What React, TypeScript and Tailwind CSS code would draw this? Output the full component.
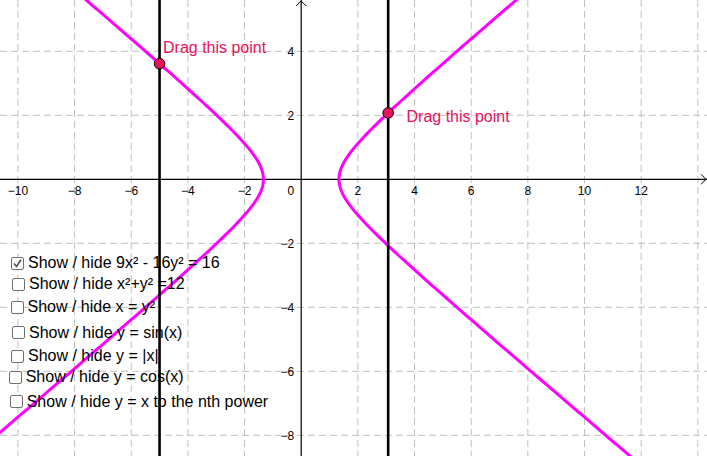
import React from "react";

const OX = 301.2;
const OY = 179.3;
const SX = 28.33;
const SY = 32;
const W = 707;
const H = 456;

const px = (x: number) => OX + x * SX;
const py = (y: number) => OY - y * SY;

function branch(sign: number) {
  const pts: string[] = [];
  for (let i = 0; i <= 400; i++) {
    const y = -9 + (15.5 * i) / 400;
    const x = sign * (4 / 3) * Math.sqrt(1 + y * y);
    pts.push(`${i === 0 ? "M" : "L"}${px(x).toFixed(2)},${py(y).toFixed(2)}`);
  }
  return pts.join(" ");
}

const rows = [
  { top: 263.3, box: 11, text: "Show / hide 9x² - 16y² = 16", checked: true },
  { top: 284, box: 12, text: "Show / hide x²+y² =12", checked: false },
  { top: 307, box: 10.5, text: "Show / hide x = y²", checked: false },
  { top: 332.7, box: 12, text: "Show / hide y = sin(x)", checked: false },
  { top: 356, box: 11, text: "Show / hide y = |x|", checked: false },
  { top: 377.3, box: 8.7, text: "Show / hide y = cos(x)", checked: false },
  { top: 401.7, box: 9.7, text: "Show / hide y = x to the nth power", checked: false },
];

export default function App() {
  const xTicks = [-10, -8, -6, -4, -2, 2, 4, 6, 8, 10, 12, 14];
  const yTicks = [4, 2, -2, -4, -6, -8];
  const xLabels = [-10, -8, -6, -4, -2, 2, 4, 6, 8, 10, 12];
  const fmt = (n: number) => (n < 0 ? "\u2212" + Math.abs(n) : String(n));
  const leftX = -5;
  const leftY = (3 / 4) * Math.sqrt(leftX * leftX - 16 / 9);
  const rightX = 3.07;
  const rightY = (3 / 4) * Math.sqrt(rightX * rightX - 16 / 9);

  return (
    <div className="relative w-[707px] h-[456px] overflow-hidden bg-white font-['Liberation_Sans',Arial,sans-serif]">
      <svg width={W} height={H} className="absolute left-0 top-0" style={{ fontFamily: "'Liberation Sans', Arial, sans-serif" }}>
        {/* grid */}
        {xTicks.map((t) => (
          <line key={"gx" + t} x1={px(t)} y1={0} x2={px(t)} y2={H} stroke="#c0c0c0" strokeWidth={1} strokeDasharray="7 4" />
        ))}
        {yTicks.map((t) => (
          <line key={"gy" + t} x1={0} y1={py(t)} x2={W} y2={py(t)} stroke="#c0c0c0" strokeWidth={1} strokeDasharray="7 4" />
        ))}
        {/* axes */}
        <line x1={0} y1={OY} x2={W} y2={OY} stroke="#000" strokeWidth={1.2} />
        <line x1={OX} y1={0} x2={OX} y2={H} stroke="#000" strokeWidth={1.2} />
        <polyline points={`${W - 6},${OY - 5} ${W - 1},${OY} ${W - 6},${OY + 5}`} fill="none" stroke="#000" strokeWidth={1} />
        <polyline points={`${OX - 5},${6} ${OX},${1} ${OX + 5},${6}`} fill="none" stroke="#000" strokeWidth={1} />
        {/* labels */}
        {xLabels.map((t) => (
          <text key={"lx" + t} x={px(t)} y={OY + 16} fontSize={12} textAnchor="middle" fill="#000">
            {fmt(t)}
          </text>
        ))}
        {yTicks.map((t) => (
          <text key={"ly" + t} x={OX - 7} y={py(t) + 4.5} fontSize={12} textAnchor="end" fill="#000">
            {fmt(t)}
          </text>
        ))}
        <text x={OX - 7} y={OY + 16} fontSize={12} textAnchor="end" fill="#000">0</text>
        {/* hyperbola */}
        <path d={branch(1)} fill="none" stroke="#ff00ff" strokeWidth={3} />
        <path d={branch(-1)} fill="none" stroke="#ff00ff" strokeWidth={3} />
        {/* vertical lines */}
        <line x1={px(leftX)} y1={0} x2={px(leftX)} y2={H} stroke="#000" strokeWidth={2.6} />
        <line x1={px(rightX)} y1={0} x2={px(rightX)} y2={H} stroke="#000" strokeWidth={2.6} />
        {/* points */}
        <circle cx={px(leftX)} cy={py(leftY)} r={5.3} fill="#e8125c" stroke="#000" strokeWidth={1} />
        <circle cx={px(rightX)} cy={py(rightY)} r={5.3} fill="#e8125c" stroke="#000" strokeWidth={1} />
        <text x={163} y={53} fontSize={16} fill="#e8125c">Drag this point</text>
        <text x={406.5} y={122} fontSize={16} fill="#e8125c">Drag this point</text>
      </svg>

      {rows.map((r, i) => (
        <label
          key={i}
          className="absolute flex items-center gap-[4px] h-[18px] text-[16px] leading-[18px] text-black whitespace-nowrap"
          style={{ top: r.top - 9, left: r.box }}
        >
          <span className="w-[13px] h-[13px] rounded-[2px] border-[1.5px] border-[#707070] bg-white flex items-center justify-center shrink-0">
            {r.checked && (
              <svg width="11" height="11" viewBox="0 0 11 11">
                <polyline points="2,5.5 4.5,8.5 9,1.8" fill="none" stroke="#505050" strokeWidth={1.6} />
              </svg>
            )}
          </span>
          <span>{r.text}</span>
        </label>
      ))}
    </div>
  );
}
